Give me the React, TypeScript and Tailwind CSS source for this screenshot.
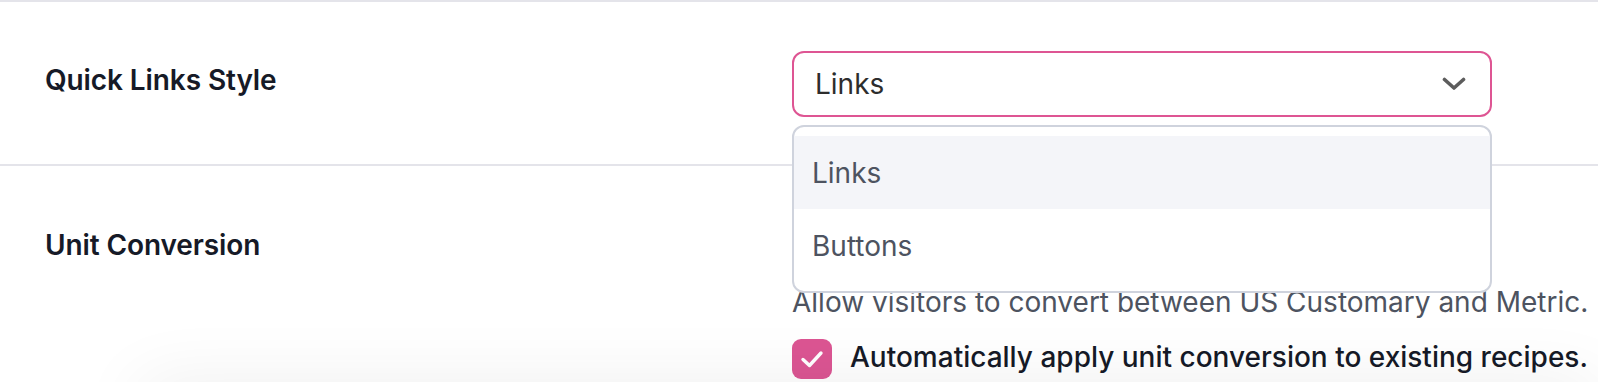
import React from "react";

const font = { fontFamily: "Inter, 'Noto Sans', sans-serif" };

const Chevron = () => (
	<svg width="24" height="14" viewBox="0 0 24 14" fill="none">
		<path
			d="M2.5 2.5 L12 11 L21.5 2.5"
			stroke="#5c5c5c"
			strokeWidth="3.6"
			strokeLinecap="round"
			strokeLinejoin="round"
		/>
	</svg>
);

const Check = () => (
	<svg width="24" height="20" viewBox="0 0 24 20" fill="none">
		<path
			d="M3 10.5 L9.5 16.5 L21 4"
			stroke="#ffffff"
			strokeWidth="3.4"
			strokeLinecap="round"
			strokeLinejoin="round"
		/>
	</svg>
);

const App = () => {
	return (
		<div
			className="relative h-[382px] w-full overflow-hidden bg-white"
			style={font}
		>
			<div className="h-[2px] w-full bg-[#e4e4ea]" />

			{/* Quick Links Style */}
			<div className="flex h-[164px] border-b-2 border-[#e4e4ea] px-[45px]">
				<div className="w-[747px] shrink-0 pt-[60px]">
					<h3 className="text-[28px] leading-[36px] font-semibold tracking-[-0.1px] text-[#161a27]">
						Quick Links Style
					</h3>
				</div>
				<div className="relative flex-1 pt-[49px]">
					<button className="flex h-[66px] w-[700px] items-center justify-between rounded-[12px] border-2 border-[#de5593] bg-white pl-[21px] pr-[24px] text-left">
						<span className="text-[28px] leading-[36px] text-[#2d2d2d]">
							Links
						</span>
						<Chevron />
					</button>
					<div className="absolute top-[123px] left-0 z-10 w-[700px] rounded-[12px] border-2 border-[#cfd3dd] bg-white py-[9px]">
						<div className="flex h-[73px] items-center bg-[#f4f5f9] px-[18px] text-[28px] leading-[36px] text-[#4d5360]">
							Links
						</div>
						<div className="flex h-[73px] items-center px-[18px] text-[28px] leading-[36px] text-[#4d5360]">
							Buttons
						</div>
					</div>
				</div>
			</div>

			{/* Unit Conversion */}
			<div className="flex px-[45px]">
				<div className="w-[747px] shrink-0 pt-[61px]">
					<h3 className="text-[28px] leading-[36px] font-semibold tracking-[-0.1px] text-[#161a27]">
						Unit Conversion
					</h3>
				</div>
				<div className="min-w-0 flex-1 pt-[118px]">
					<p className="whitespace-nowrap text-[28px] leading-[36px] text-[#4d5360]">
						Allow visitors to convert between US Customary and Metric.
					</p>
					<label className="mt-[19px] flex items-start gap-[18px]">
						<span className="flex h-[40px] w-[40px] shrink-0 items-center justify-center rounded-[9px] bg-[#dc5593]">
							<Check />
						</span>
						<span className="whitespace-nowrap text-[28px] leading-[36px] font-medium text-[#161a27]">
							Automatically apply unit conversion to existing recipes.
						</span>
					</label>
				</div>
			</div>

			{/* footer bar shadow */}
			<div className="absolute top-[382px] left-[140px] right-0 h-[60px] bg-white shadow-[0_0_70px_rgba(0,0,0,0.07)]" />
		</div>
	);
};

export default App;
